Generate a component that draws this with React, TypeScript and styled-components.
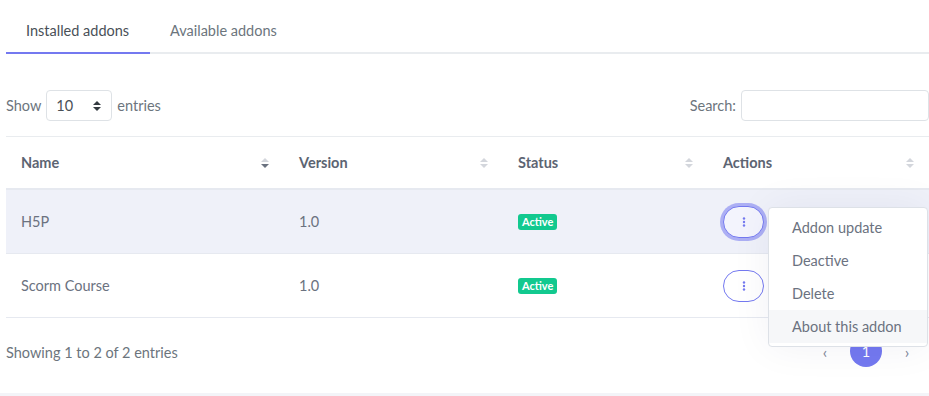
import React from "react";
import styled, { createGlobalStyle } from "styled-components";

const GlobalStyle = createGlobalStyle`
  html, body { margin: 0; padding: 0; background: #ffffff; }
  body { font-family: Lato, "Open Sans", sans-serif; font-size: 14.5px; color: #6c757d; }
  * { box-sizing: border-box; }
`;

const primary = "#7479f0";

const Page = styled.div`
  width: 929px;
  height: 396px;
  padding: 9px 0 0 6px;
  display: flex;
  flex-direction: column;
  overflow: hidden;
`;

const Tabs = styled.div`
  display: flex;
  border-bottom: 2px solid #e9ecef;
`;

const Tab = styled.div<{ $active?: boolean }>`
  padding: 11px 20px 11px;
  line-height: 21px;
  color: ${(p) => (p.$active ? "#495057" : "#6c757d")};
  margin-bottom: -2px;
  border-bottom: 2px solid ${(p) => (p.$active ? primary : "transparent")};
  width: ${(p) => (p.$active ? "144px" : "auto")};
`;

const Controls = styled.div`
  display: flex;
  justify-content: space-between;
  align-items: center;
  margin-top: 36px;
  height: 31px;
`;

const Label = styled.label`
  display: flex;
  align-items: center;
  gap: 5px;
  color: #6c757d;
`;

const SelectBox = styled.div`
  width: 66px;
  height: 31px;
  border: 1px solid #dee2e6;
  border-radius: 4px;
  display: flex;
  align-items: center;
  justify-content: space-between;
  padding: 0 10px 0 9px;
  color: #495057;
`;

const SearchInput = styled.input`
  width: 188px;
  height: 31px;
  border: 1px solid #dee2e6;
  border-radius: 4px;
  outline: none;
`;

const Table = styled.div`
  margin-top: 15px;
  border-top: 1px solid #e9ecef;
  display: flex;
  flex-direction: column;
`;

const Row = styled.div<{ $head?: boolean; $hl?: boolean }>`
  display: grid;
  grid-template-columns: 278px 219px 205px 221px;
  height: ${(p) => (p.$head ? "53px" : "64px")};
  border-bottom: ${(p) => (p.$head ? "2px" : "1px")} solid #e6e9f0;
  background: ${(p) => (p.$hl ? "#eff1f9" : "transparent")};
  align-items: center;
`;

const Cell = styled.div<{ $head?: boolean }>`
  position: relative;
  padding: 0 15px;
  display: flex;
  align-items: center;
  justify-content: space-between;
  font-weight: ${(p) => (p.$head ? 700 : 400)};
  color: ${(p) => (p.$head ? "#5c6472" : "#6b7280")};
`;

const SortIcon = ({ down }: { down?: boolean }) => (
  <svg width="8" height="12" viewBox="0 0 8 12">
    <path d="M0 5 L4 1 L8 5 Z" fill="#d3d6dc" />
    <path d="M0 7 L4 11 L8 7 Z" fill={down ? "#6b7280" : "#d3d6dc"} />
  </svg>
);

const Badge = styled.span`
  background: #12c98f;
  color: #fff;
  font-size: 11px;
  font-weight: 700;
  padding: 1px 4px 2px;
  border-radius: 3px;
  line-height: 13px;
`;

const ActionButton = styled.button<{ $focus?: boolean }>`
  width: 41px;
  height: 32px;
  border-radius: 16px;
  border: 1px solid ${primary};
  background: ${(p) => (p.$focus ? "#f3f4fd" : "#fff")};
  box-shadow: ${(p) => (p.$focus ? "0 0 0 3px rgba(116,121,240,0.55)" : "none")};
  display: flex;
  align-items: center;
  justify-content: center;
  padding: 0;
`;

const Dots = () => (
  <svg width="4" height="10" viewBox="0 0 4 10">
    <circle cx="2" cy="1.5" r="1.2" fill={primary} />
    <circle cx="2" cy="5" r="1.2" fill={primary} />
    <circle cx="2" cy="8.5" r="1.2" fill={primary} />
  </svg>
);

const Menu = styled.div`
  position: absolute;
  left: 60px;
  top: 1px;
  width: 160px;
  background: #fff;
  border: 1px solid #dde1e7;
  border-radius: 4px;
  padding: 3px 0 3px;
  box-shadow: 0 0 40px rgba(30, 40, 80, 0.06);
  z-index: 2;
`;

const MenuItem = styled.div<{ $hover?: boolean }>`
  height: 33px;
  line-height: 33px;
  padding-left: 23px;
  font-weight: 400;
  color: #6b7280;
  background: ${(p) => (p.$hover ? "#f6f7f9" : "transparent")};
`;

const Footer = styled.div`
  display: flex;
  justify-content: space-between;
  align-items: center;
  margin-top: 18px;
  height: 32px;
`;

const Pager = styled.div`
  display: flex;
  align-items: center;
  margin-right: 10px;
  margin-top: -2px;
`;

const PageArrow = styled.span`
  width: 24px;
  text-align: center;
  color: #7d8696;
  font-size: 16px;
`;

const PageNum = styled.span`
  width: 32px;
  height: 32px;
  border-radius: 50%;
  background: ${primary};
  color: #fff;
  display: flex;
  align-items: center;
  justify-content: center;
  margin: 0 13px;
`;

const BottomBand = styled.div`
  margin: auto 0 0 -6px;
  height: 3px;
  background: #f3f4f8;
`;

export default function App() {
  return (
    <>
      <GlobalStyle />
      <Page>
        <Tabs>
          <Tab $active>Installed addons</Tab>
          <Tab>Available addons</Tab>
        </Tabs>
        <Controls>
          <Label>
            Show
            <SelectBox>
              <span>10</span>
              <svg width="8" height="12" viewBox="0 0 8 12">
                <path d="M0 5 L4 1 L8 5 Z" fill="#343a40" />
                <path d="M0 7 L4 11 L8 7 Z" fill="#343a40" />
              </svg>
            </SelectBox>
            entries
          </Label>
          <Label>
            Search:
            <SearchInput />
          </Label>
        </Controls>
        <Table>
          <Row $head>
            <Cell $head>Name<SortIcon down /></Cell>
            <Cell $head>Version<SortIcon /></Cell>
            <Cell $head>Status<SortIcon /></Cell>
            <Cell $head>Actions<SortIcon /></Cell>
          </Row>
          <Row $hl>
            <Cell>H5P</Cell>
            <Cell>1.0</Cell>
            <Cell><Badge>Active</Badge></Cell>
            <Cell>
              <ActionButton $focus><Dots /></ActionButton>
              <Menu>
                <MenuItem>Addon update</MenuItem>
                <MenuItem>Deactive</MenuItem>
                <MenuItem>Delete</MenuItem>
                <MenuItem $hover>About this addon</MenuItem>
              </Menu>
            </Cell>
          </Row>
          <Row>
            <Cell>Scorm Course</Cell>
            <Cell>1.0</Cell>
            <Cell><Badge>Active</Badge></Cell>
            <Cell><ActionButton><Dots /></ActionButton></Cell>
          </Row>
        </Table>
        <Footer>
          <span>Showing 1 to 2 of 2 entries</span>
          <Pager>
            <PageArrow>‹</PageArrow>
            <PageNum>1</PageNum>
            <PageArrow>›</PageArrow>
          </Pager>
        </Footer>
        <BottomBand />
      </Page>
    </>
  );
}
